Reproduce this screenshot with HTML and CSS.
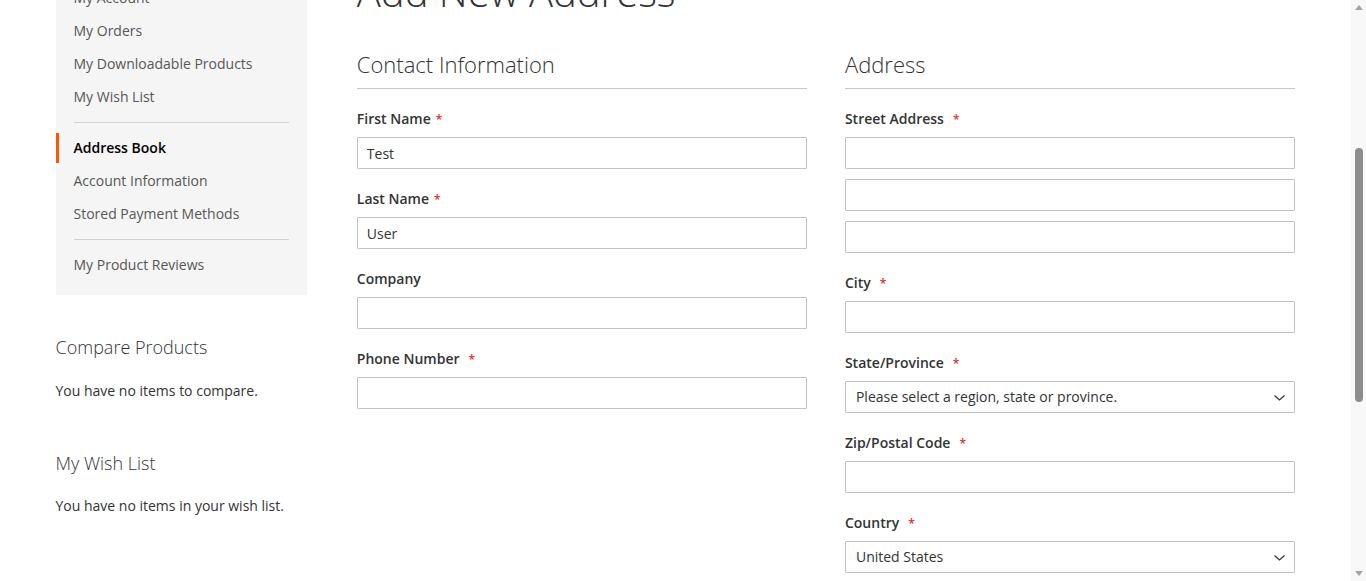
FILE: index.html
```html
<!DOCTYPE html>
<html lang="en">
<head>
<meta charset="utf-8">
<title>Add New Address</title>
<link rel="stylesheet" href="styles.css">
</head>
<body>
<div class="viewport">
  <div class="page">
    <div class="columns">
      <aside class="sidebar">
        <nav class="account-nav">
          <ul class="nav-items">
            <li class="nav-item"><a href="#">My Account</a></li>
            <li class="nav-item"><a href="#">My Orders</a></li>
            <li class="nav-item"><a href="#">My Downloadable Products</a></li>
            <li class="nav-item"><a href="#">My Wish List</a></li>
            <li class="nav-item"><span class="delimiter"></span></li>
            <li class="nav-item current"><strong>Address Book</strong></li>
            <li class="nav-item"><a href="#">Account Information</a></li>
            <li class="nav-item"><a href="#">Stored Payment Methods</a></li>
            <li class="nav-item"><span class="delimiter"></span></li>
            <li class="nav-item"><a href="#">My Product Reviews</a></li>
          </ul>
        </nav>
        <div class="side-block compare">
          <div class="block-title">Compare Products</div>
          <p class="empty">You have no items to compare.</p>
        </div>
        <div class="side-block wishlist">
          <div class="block-title">My Wish List</div>
          <p class="empty">You have no items in your wish list.</p>
        </div>
      </aside>
      <main class="main">
        <h1 class="page-title">Add New Address</h1>
        <form class="form-address">
          <fieldset class="fieldset">
            <legend class="legend">Contact Information</legend>
            <div class="field">
              <label class="label">First Name<span class="req">*</span></label>
              <input class="input-text" type="text" value="Test">
            </div>
            <div class="field">
              <label class="label">Last Name<span class="req">*</span></label>
              <input class="input-text" type="text" value="User">
            </div>
            <div class="field">
              <label class="label">Company</label>
              <input class="input-text" type="text" value="">
            </div>
            <div class="field">
              <label class="label">Phone Number<span class="req wide">*</span></label>
              <input class="input-text" type="text" value="">
            </div>
          </fieldset>
          <fieldset class="fieldset">
            <legend class="legend">Address</legend>
            <div class="field">
              <label class="label">Street Address<span class="req wide">*</span></label>
              <input class="input-text" type="text" value="">
              <input class="input-text extra" type="text" value="">
              <input class="input-text extra" type="text" value="">
            </div>
            <div class="field">
              <label class="label">City<span class="req wide">*</span></label>
              <input class="input-text" type="text" value="">
            </div>
            <div class="field">
              <label class="label">State/Province<span class="req wide">*</span></label>
              <div class="select-wrap">
                <select class="select"><option>Please select a region, state or province.</option></select>
                <svg class="chevron" width="11" height="6" viewBox="0 0 11 6"><path d="M0.5 0.5 L5.5 5 L10.5 0.5" fill="none" stroke="#333" stroke-width="1.2"/></svg>
              </div>
            </div>
            <div class="field">
              <label class="label">Zip/Postal Code<span class="req wide">*</span></label>
              <input class="input-text" type="text" value="">
            </div>
            <div class="field">
              <label class="label">Country<span class="req wide">*</span></label>
              <div class="select-wrap">
                <select class="select"><option>United States</option></select>
                <svg class="chevron" width="11" height="6" viewBox="0 0 11 6"><path d="M0.5 0.5 L5.5 5 L10.5 0.5" fill="none" stroke="#333" stroke-width="1.2"/></svg>
              </div>
            </div>
          </fieldset>
        </form>
      </main>
    </div>
  </div>
  <div class="scrollbar">
    <div class="sb-btn"><span class="arrow-up"></span></div>
    <div class="sb-track"><div class="sb-thumb"></div></div>
    <div class="sb-btn bottom"><span class="arrow-down"></span></div>
  </div>
</div>
</body>
</html>
```

FILE: styles.css
```css
* { box-sizing: border-box; }
html, body {
  margin: 0;
  padding: 0;
  height: 100%;
  overflow: hidden;
  background: #fff;
}
body {
  font-family: "Open Sans", "Liberation Sans", sans-serif;
  font-size: 14px;
  line-height: 20px;
  color: #333;
}
.viewport {
  display: flex;
  height: 581px;
}
.page {
  width: 1351px;
  flex: 0 0 1351px;
  overflow: hidden;
}
.columns {
  width: 1240px;
  margin: -32px auto 0;
  display: flex;
  align-items: flex-start;
}
.sidebar {
  width: 22.3%;
  padding-right: 2%;
  flex: 0 0 auto;
}
.main {
  width: 77.7%;
  padding-left: 2%;
  flex: 0 0 auto;
}

/* account nav */
.account-nav {
  background: #f5f5f5;
  padding: 15px 0;
}
.nav-items {
  list-style: none;
  margin: 0;
  padding: 0;
}
.nav-item { margin: 3px 0 0; }
.nav-item:first-child { margin-top: 0; }
.nav-item a,
.nav-item strong {
  display: block;
  padding: 5px 18px 5px 15px;
  border-left: 3px solid transparent;
  color: #575757;
  text-decoration: none;
  font-weight: 400;
}
.nav-item.current strong {
  border-left-color: #ff5501;
  color: #000;
  font-weight: 600;
}
.delimiter {
  display: block;
  border-top: 1px solid #d1d1d1;
  margin: 10px 18px;
}

/* sidebar blocks */
.side-block.compare { margin-top: 41px; }
.side-block.wishlist { margin-top: 51px; }
.block-title {
  font-size: 18px;
  font-weight: 300;
  line-height: 22px;
  margin-bottom: 22px;
  color: #333;
}
.compare .block-title { margin-bottom: 23px; }
.empty {
  margin: 0;
  color: #333;
}

/* main */
.page-title {
  font-size: 40px;
  font-weight: 300;
  line-height: 48px;
  margin: 0 0 36px;
  color: #333;
}
.form-address {
  display: flex;
  justify-content: space-between;
}
.fieldset {
  width: 48%;
  border: 0;
  margin: 0;
  padding: 0;
  min-width: 0;
}
.legend {
  display: block;
  width: 100%;
  float: left;
  font-size: 22px;
  font-weight: 300;
  line-height: 25px;
  padding: 0 0 11px;
  margin: 0 0 20px;
  border-bottom: 1px solid #c6c6c6;
  color: #333;
}
.legend + * { clear: both; }
.field {
  margin: 0 0 20px;
}
.label {
  display: block;
  height: 20px;
  line-height: 20px;
  font-weight: 600;
  margin: 0 0 8px;
  color: #333;
}
.req {
  color: #e02b27;
  font-size: 12px;
  line-height: 1;
  margin-left: 5px;
}
.req.wide { margin-left: 9px; }
.input-text {
  display: block;
  width: 100%;
  height: 32px;
  border: 1px solid #c2c2c2;
  border-radius: 1px;
  padding: 0 9px;
  font-family: "Open Sans", "Liberation Sans", sans-serif;
  font-size: 14px;
  color: #333;
  background: #fff;
  outline: none;
}
.input-text.extra { margin-top: 10px; }
.select-wrap { position: relative; }
.select {
  display: block;
  width: 100%;
  height: 32px;
  border: 1px solid #c2c2c2;
  border-radius: 1px;
  padding: 0 25px 2px 10px;
  font-family: "Open Sans", "Liberation Sans", sans-serif;
  font-size: 14px;
  color: #333;
  background: #fff;
  appearance: none;
  -webkit-appearance: none;
  outline: none;
}
.chevron {
  position: absolute;
  right: 10px;
  top: 14px;
  pointer-events: none;
}

/* fake scrollbar */
.scrollbar {
  width: 15px;
  flex: 0 0 15px;
  height: 581px;
  background: #f8f8f8;
  display: flex;
  flex-direction: column;
}
.sb-btn {
  height: 15px;
  display: flex;
  justify-content: center;
  align-items: center;
}
.arrow-up {
  width: 0;
  height: 0;
  border-left: 4px solid transparent;
  border-right: 4px solid transparent;
  border-bottom: 5px solid #a3a3a3;
}
.arrow-down {
  width: 0;
  height: 0;
  border-left: 4px solid transparent;
  border-right: 4px solid transparent;
  border-top: 5px solid #a3a3a3;
}
.sb-track {
  flex: 1;
  display: flex;
  justify-content: center;
}
.sb-thumb {
  width: 8px;
  height: 254px;
  margin-top: 133px;
  border-radius: 4px;
  background: #8c8c8c;
}
```
